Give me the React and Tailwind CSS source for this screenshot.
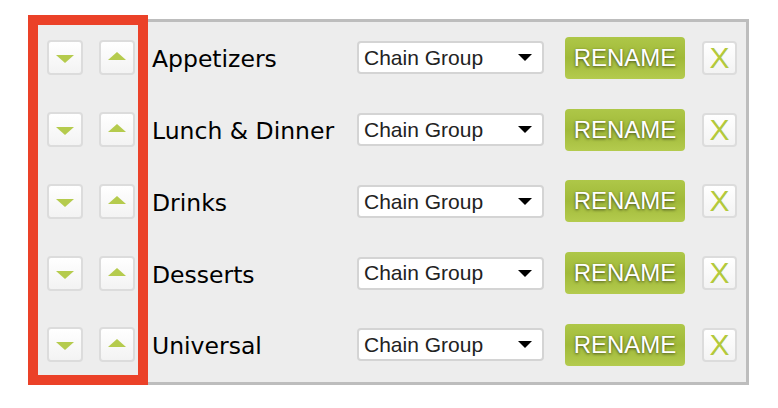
import React from 'react';

const groups = ['Appetizers', 'Lunch & Dinner', 'Drinks', 'Desserts', 'Universal'];

const smallBtn =
  'w-9 h-[35px] rounded-[4px] border-2 border-[#dcdcdc] bg-gradient-to-b from-white to-[#f3f3f3] flex justify-center';

const Row = ({ name }) => (
  <div className="flex items-center h-[71.75px]">
    <button className={smallBtn + ' items-end pb-[10px]'}>
      <span className="w-0 h-0 border-l-[9px] border-r-[9px] border-t-[8px] border-l-transparent border-r-transparent border-t-[#b5cb4d]" />
    </button>
    <button className={smallBtn + ' items-start pt-[10px] ml-4'}>
      <span className="w-0 h-0 border-l-[9px] border-r-[9px] border-b-[8px] border-l-transparent border-r-transparent border-b-[#b5cb4d]" />
    </button>
    <div className="ml-[17px] mt-[4px] w-[205px] text-[23.5px] text-black font-['DejaVu_Sans',sans-serif] whitespace-nowrap">
      {name}
    </div>
    <div className="w-[187px] h-[33px] rounded-[4px] border-2 border-[#d4d4d4] bg-white flex items-center justify-between pl-[5px] pr-[10px] font-['Liberation_Sans',Arial,sans-serif] text-[21px] text-[#222]">
      <span>Chain Group</span>
      <span className="w-0 h-0 border-l-[7px] border-r-[7px] border-t-[7px] border-l-transparent border-r-transparent border-t-black" />
    </div>
    <button className="ml-[21px] w-[120px] h-[42px] rounded-[4px] bg-gradient-to-b from-[#aec748] via-[#a0b938] to-[#b4cb4e] text-white text-[24px] font-['Liberation_Sans',Arial,sans-serif] [text-shadow:0_1px_3px_rgba(0,0,0,0.6)]">
      RENAME
    </button>
    <button className="ml-[17px] w-[35px] h-[34px] rounded-[4px] border-2 border-[#dcdcdc] bg-gradient-to-b from-white to-[#f3f3f3] text-[#b3c93b] text-[30px] leading-none font-['Liberation_Sans',Arial,sans-serif] flex items-center justify-center">
      X
    </button>
  </div>
);

export default function App() {
  return (
    <div className="relative w-[778px] h-[408px] bg-white">
      <div className="ml-[35px] pt-[19px]">
        <div className="w-[714px] h-[366px] border-[3px] border-[#bdbdbd] bg-[#ededed] pl-[9px]">
          {groups.map((g) => (
            <Row key={g} name={g} />
          ))}
        </div>
      </div>
      <div className="absolute left-[28px] top-[15px] w-[120px] h-[370px] border-[10px] border-[#eb4128]" />
    </div>
  );
}
